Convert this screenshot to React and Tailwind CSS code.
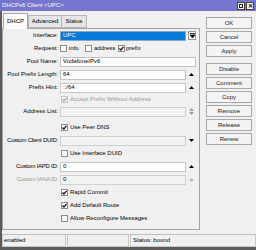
import React from 'react';

// tiny winbox-style dialog
function Check({ checked, disabled }) {
  return (
    <span
      className={`flex h-[7px] w-[7px] shrink-0 items-center justify-center border ${
        disabled ? 'border-[#c6c6c6] bg-[#f4f4f4]' : 'border-[#8e8e8e] bg-white'
      }`}
    >
      {checked && (
        <svg width="5" height="5" viewBox="0 0 5 5">
          <path d="M0.4 2.5 L1.9 4 L4.6 0.8" fill="none" stroke={disabled ? '#a4a4a4' : '#111'} strokeWidth="1.2" />
        </svg>
      )}
    </span>
  );
}

function Up({ gray }) {
  return (
    <svg width="5" height="3" viewBox="0 0 5 3">
      <path d="M0 3 L2.5 0 L5 3Z" fill={gray ? '#b0b0b0' : '#000'} />
    </svg>
  );
}

function Down() {
  return (
    <svg width="5" height="3" viewBox="0 0 5 3">
      <path d="M0 0 L2.5 3 L5 0Z" fill="#000" />
    </svg>
  );
}

function UpDown() {
  return (
    <svg width="5" height="7" viewBox="0 0 5 7">
      <path d="M0 3 L2.5 0 L5 3Z M0 4 L2.5 7 L5 4Z" fill="#9c9c9c" />
    </svg>
  );
}

function Field({ value, disabled, w = 'w-[136px]' }) {
  return (
    <span
      className={`flex h-[10px] items-center border pl-[2px] ${w} ${
        disabled ? 'border-[#d0d0d0] bg-[#f2f2f2]' : 'border-[#c4c4c4] bg-white'
      }`}
    >
      {value}
    </span>
  );
}

function Row({ label, gray, tight, children, h = 'h-[13px]' }) {
  return (
    <div className={`flex items-center ${h}`}>
      <span
        className={`flex w-[55px] shrink-0 justify-end whitespace-nowrap ${tight ? 'tracking-[-0.25px]' : ''} ${
          gray ? 'text-[#9a9a9a]' : 'text-black'
        }`}
      >
        {label}
      </span>
      <div className="ml-[2px] flex items-center">{children}</div>
    </div>
  );
}

function CheckRow({ label, checked, disabled, h = 'h-[13px]' }) {
  return (
    <div className={`flex items-center pl-[58px] ${h}`}>
      <Check checked={checked} disabled={disabled} />
      <span className={`ml-[2px] ${disabled ? 'text-[#9a9a9a]' : ''}`}>{label}</span>
    </div>
  );
}

function Arrow({ children }) {
  return <span className="flex w-[10px] justify-center">{children}</span>;
}

function Btn({ children }) {
  return (
    <div className="flex h-[12px] items-center justify-center border border-[#a8a8a8] bg-[#f3f3f3] text-[#222]">
      {children}
    </div>
  );
}

export default function App() {
  const buttons = ['Disable', 'Comment', 'Copy', 'Remove', 'Release', 'Renew'];

  return (
    <div className="h-[250px] w-[256px] overflow-hidden bg-[#f0f0f0] font-['Liberation_Sans',Arial,sans-serif] text-[6px] leading-[7px] text-black">
      {/* title bar */}
      <div className="flex h-[11px] items-center justify-between bg-[#7575cd] pl-[2px] pr-[2px] text-white">
        <span>DHCPv6 Client &lt;UPC&gt;</span>
        <div className="flex gap-[1px]">
          <span className="flex h-[8px] w-[8px] items-center justify-center border border-[#444] bg-[#f4f4f4]">
            <span className="h-[4px] w-[4px] border border-[#222]" />
          </span>
          <span className="flex h-[8px] w-[8px] items-center justify-center border border-[#444] bg-[#f4f4f4] text-[6px] font-bold leading-none text-black">
            ✕
          </span>
        </div>
      </div>

      <div className="flex h-[239px] flex-col border-b-[3px] border-l-2 border-[#5b5b5b]">
        <div className="flex">
          {/* tabs + panel */}
          <div className="flex flex-col pt-[2px]">
            <div className="relative z-10 flex h-[15px] items-end pl-[1px]">
              <div className="-mb-px flex h-[16px] w-[25px] items-center justify-center border border-b-0 border-[#a4a4a4] bg-[#fbfbfb]">
                DHCP
              </div>
              <div className="flex h-[13px] w-[34px] items-center justify-center border border-[#b6b6b6] bg-[#e6e6e6]">
                Advanced
              </div>
              <div className="flex h-[13px] w-[25px] items-center justify-center border border-l-0 border-[#b6b6b6] bg-[#e6e6e6]">
                Status
              </div>
            </div>
            <div className="h-[202px] w-[198px] border border-[#a4a4a4] bg-[#f0f0f0]">
              <Row label="Interface:">
                <span className="flex h-[10px] w-[126px] items-center border border-[#8aa8c8] bg-[#0a78d7] pl-[2px] text-white">
                  UPC
                </span>
                <span className="ml-[2px] flex h-[9px] w-[8px] items-center justify-center border border-[#9a9a9a] bg-white">
                  <svg width="5" height="5" viewBox="0 0 5 5">
                    <path d="M0 0.5 H5 M0 2 L2.5 5 L5 2Z" stroke="#000" strokeWidth="0.8" fill="#000" />
                  </svg>
                </span>
              </Row>
              <Row label="Request:">
                <div className="flex w-[25px] items-center">
                  <Check />
                  <span className="ml-[2px]">info</span>
                </div>
                <div className="flex w-[33px] items-center">
                  <Check />
                  <span className="ml-[2px]">address</span>
                </div>
                <div className="flex items-center">
                  <Check checked />
                  <span className="ml-[1px]">prefix</span>
                </div>
              </Row>
              <Row label="Pool Name:">
                <Field value="VodafoneIPv6" />
              </Row>
              <Row label="Pool Prefix Length:">
                <Field value="64" w="w-[126px]" />
                <Arrow>
                  <Up />
                </Arrow>
              </Row>
              <Row label="Prefix Hint:">
                <Field value="::/64" w="w-[126px]" />
                <Arrow>
                  <Up />
                </Arrow>
              </Row>
              <CheckRow label="Accept Prefix Without Address" checked disabled h="h-[11px]" />
              <Row label="Address List:">
                <Field disabled w="w-[126px]" />
                <Arrow>
                  <UpDown />
                </Arrow>
              </Row>
              <div className="h-[3px]" />
              <CheckRow label="Use Peer DNS" checked />
              <Row label="Custom Client DUID:" tight>
                <Field disabled w="w-[126px]" />
                <Arrow>
                  <Down />
                </Arrow>
              </Row>
              <CheckRow label="Use Interface DUID" />
              <Row label="Custom IAPD ID:" tight>
                <Field value="0" w="w-[126px]" />
                <Arrow>
                  <Up />
                </Arrow>
              </Row>
              <Row label="Custom IANA ID:" gray tight>
                <Field value="0" disabled w="w-[126px]" />
                <Arrow>
                  <Up gray />
                </Arrow>
              </Row>
              <CheckRow label="Rapid Commit" checked />
              <CheckRow label="Add Default Route" checked />
              <CheckRow label="Allow Reconfigure Messages" />
            </div>
          </div>

          {/* right buttons */}
          <div className="ml-[6px] flex w-[46px] flex-col gap-[2px] pt-[6px]">
            <Btn>OK</Btn>
            <Btn>Cancel</Btn>
            <Btn>Apply</Btn>
            <div className="h-[2px]" />
            {buttons.map((b) => (
              <Btn key={b}>{b}</Btn>
            ))}
          </div>
        </div>

        {/* status bar */}
        <div className="mt-[4px] flex h-[13px] gap-[1px] border-t border-[#c0c0c0]">
          <div className="flex w-[64px] items-center border border-t-0 border-[#c8c8c8] pl-[1px]">enabled</div>
          <div className="w-[62px] border border-t-0 border-[#c8c8c8]" />
          <div className="flex flex-1 items-center border border-t-0 border-[#c8c8c8] pl-[2px]">Status: bound</div>
        </div>
      </div>
    </div>
  );
}
